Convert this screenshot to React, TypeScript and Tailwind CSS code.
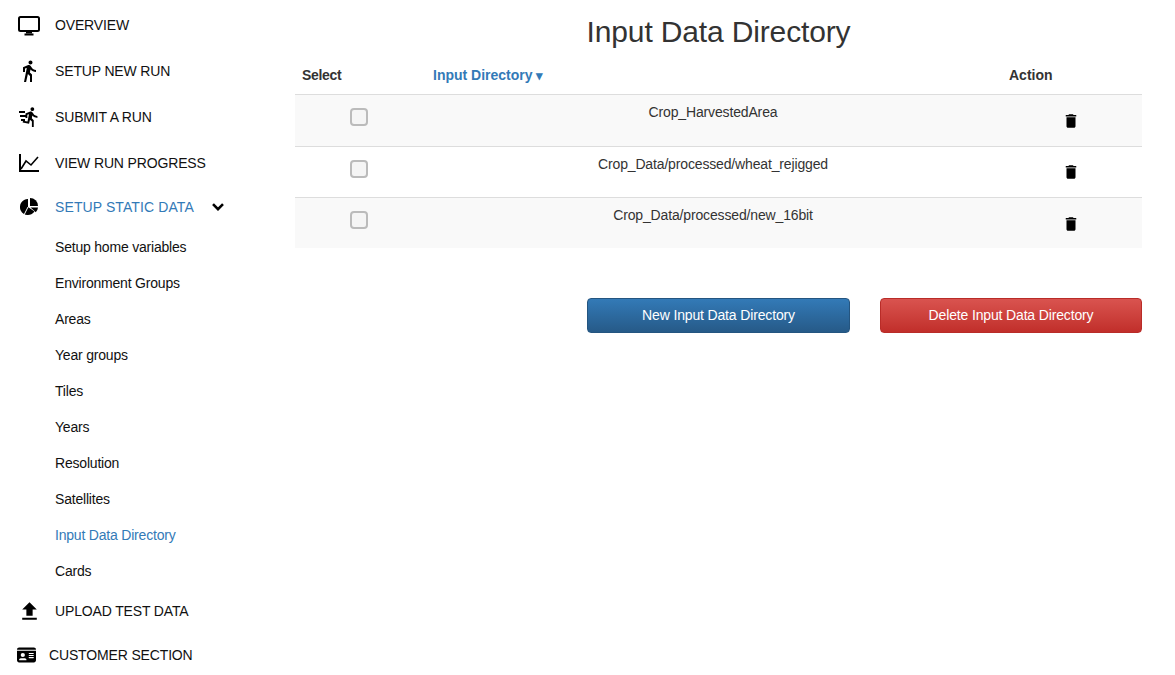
import { MdDelete, MdDirectionsRun, MdDirectionsWalk, MdFileUpload } from 'react-icons/md'
import { FaIdCard } from 'react-icons/fa6'

const subItems = [
  'Setup home variables',
  'Environment Groups',
  'Areas',
  'Year groups',
  'Tiles',
  'Years',
  'Resolution',
  'Satellites',
  'Input Data Directory',
  'Cards',
]

const rows = [
  { name: 'Crop_HarvestedArea', border: 'border-transparent', bg: 'bg-[#f9f9f9]', check: 'pt-3', text: 'pt-[6px]', trash: 'pt-4' },
  { name: 'Crop_Data/processed/wheat_rejigged', border: 'border-[#ddd]', bg: 'bg-white', check: 'pt-[13px]', text: 'pt-[7px]', trash: 'pt-4' },
  { name: 'Crop_Data/processed/new_16bit', border: 'border-[#ddd]', bg: 'bg-[#f9f9f9]', check: 'pt-[13px]', text: 'pt-[7px]', trash: 'pt-[17px]' },
]

function MonitorIcon() {
  return (
    <svg viewBox="0 0 22 20" className="h-5 w-[22px] translate-y-[1px]">
      <rect x="1" y="1" width="20" height="14" rx="1.5" fill="none" stroke="black" strokeWidth="2" />
      <rect x="8" y="15.5" width="6" height="2" fill="black" />
      <rect x="6.5" y="17.5" width="9" height="2" fill="black" />
    </svg>
  )
}

function RunIcon() {
  return (
    <span className="relative flex h-[22px] w-5 items-center justify-end">
      <MdDirectionsRun className="-mr-[3px] h-[22px] w-[22px] text-black" />
      <span className="absolute left-0 top-[5px] h-[2px] w-[6px] bg-black" />
      <span className="absolute left-[1px] top-[9px] h-[2px] w-[6px] bg-black" />
      <span className="absolute left-[2px] top-[13px] h-[2px] w-[4px] bg-black" />
    </span>
  )
}

function ChartIcon() {
  return (
    <svg viewBox="0 0 20 18" className="h-[18px] w-5" fill="none" stroke="black">
      <path d="M1 0v17h19" strokeWidth="2" />
      <path d="M2 15l5-8 5 4 7-8" strokeWidth="1.6" />
    </svg>
  )
}

function PieIcon() {
  return (
    <svg viewBox="0 0 18 18" className="h-[18px] w-[18px]">
      <path d="M8 1a8 8 0 1 0 6.5 12.6L8 9z" fill="black" />
      <path d="M10 0a8 8 0 0 1 8 8h-8z" fill="black" />
      <path d="M10.5 9.5H18a8 8 0 0 1-2.2 4.8z" fill="black" />
      <path d="M8 9L4 17" stroke="white" strokeWidth="1" />
    </svg>
  )
}

function Chevron() {
  return (
    <svg viewBox="0 0 12 8" className="ml-[18px] h-2 w-3" fill="none" stroke="black" strokeWidth="2.6">
      <path d="M1 1.2l5 5 5-5" />
    </svg>
  )
}

function NavItem({ icon, label, className = 'h-[46px]' }: { icon: React.ReactNode; label: string; className?: string }) {
  return (
    <div className={`flex items-center text-[#111] ${className}`}>
      <div className="flex w-[55px] shrink-0 justify-center pl-[3px]">{icon}</div>
      <span>{label}</span>
    </div>
  )
}

export default function App() {
  return (
    <div className="flex h-[675px] w-[1175px] overflow-hidden bg-white font-['Liberation_Sans',Arial,sans-serif] text-sm tracking-[-0.15px] text-[#333]">
      <aside className="w-[295px] shrink-0 pt-[2px]">
        <NavItem icon={<MonitorIcon />} label="OVERVIEW" />
        <NavItem icon={<MdDirectionsWalk className="h-6 w-6 text-black" />} label="SETUP NEW RUN" />
        <NavItem icon={<RunIcon />} label="SUBMIT A RUN" />
        <NavItem icon={<ChartIcon />} label="VIEW RUN PROGRESS" />
        <div className="flex h-[42px] items-center">
          <div className="flex w-[55px] shrink-0 justify-center pl-[3px]">
            <PieIcon />
          </div>
          <span className="tracking-[0.1px] text-[#337ab7]">SETUP STATIC DATA</span>
          <Chevron />
        </div>
        <ul className="pt-[1px] tracking-[-0.2px]">
          {subItems.map((item) => (
            <li
              key={item}
              className={`flex h-9 items-center pl-[55px] ${item === 'Input Data Directory' ? 'text-[#337ab7]' : 'text-[#111]'}`}
            >
              {item}
            </li>
          ))}
        </ul>
        <NavItem icon={<MdFileUpload className="h-[25px] w-[25px] text-black" />} label="UPLOAD TEST DATA" className="h-[44px]" />
        <div className="flex h-[44px] items-center">
          <div className="flex w-[49px] shrink-0 justify-start pl-[17px]">
            <FaIdCard className="h-[18px] w-[19px] text-black" />
          </div>
          <span className="text-[#111]">CUSTOMER SECTION</span>
        </div>
      </aside>

      <main className="w-[847px] shrink-0">
        <h1 className="mt-[13px] h-[38px] text-center text-[30px] leading-[38px] text-[#333]">Input Data Directory</h1>
        <div className="grid h-[44px] grid-cols-[131px_576px_140px] border-b border-[#ddd] pt-[14px] font-bold leading-5 tracking-normal">
          <div className="pl-[7px] tracking-[-0.3px]">Select</div>
          <div className="pl-[7px] text-[#337ab7]">
            Input Directory <span className="text-[13px]">▾</span>
          </div>
          <div className="pl-[7px]">Action</div>
        </div>
        {rows.map((row) => (
          <div key={row.name} className={`grid h-[51px] grid-cols-[131px_576px_140px] border-t ${row.border} ${row.bg}`}>
            <div className={`flex justify-center pr-[3px] ${row.check}`}>
              <span className="h-[18px] w-[18px] rounded-[4px] border-2 border-[#bbb] bg-[#f5f5f5]" />
            </div>
            <div className={`pr-[2px] text-center leading-5 ${row.text}`}>{row.name}</div>
            <div className={`flex justify-center pr-[2px] ${row.trash}`}>
              <MdDelete className="h-[18px] w-[18px] text-black" />
            </div>
          </div>
        ))}
        <div className="mt-[50px] flex justify-end gap-[30px]">
          <button className="h-[35px] w-[263px] rounded-[4px] border border-[#245580] bg-gradient-to-b from-[#337ab7] to-[#265a88] pb-[2px] text-white">
            New Input Data Directory
          </button>
          <button className="h-[35px] w-[262px] rounded-[4px] border border-[#b92c28] bg-gradient-to-b from-[#d9534f] to-[#c12e2a] pb-[2px] text-white">
            Delete Input Data Directory
          </button>
        </div>
      </main>
    </div>
  )
}
